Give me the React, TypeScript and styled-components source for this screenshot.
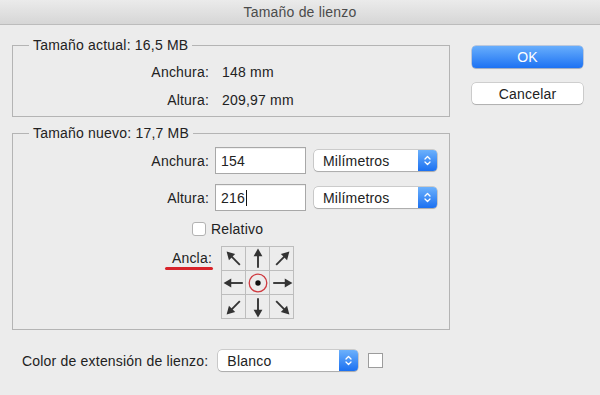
import React from 'react';
import styled, { createGlobalStyle } from 'styled-components';

const GlobalStyle = createGlobalStyle`
  html, body {
    margin: 0;
    padding: 0;
  }
  body {
    background: #ececec;
    font-family: "Liberation Sans", Arial, sans-serif;
    font-size: 14px;
    letter-spacing: 0.2px;
    color: #222;
  }
`;

const Window = styled.div`
  width: 600px;
  height: 395px;
  background: #ececec;
  display: flex;
  flex-direction: column;
  overflow: hidden;
`;

const TitleBar = styled.div`
  height: 24px;
  flex-shrink: 0;
  display: flex;
  align-items: center;
  justify-content: center;
  background: linear-gradient(#ebebeb, #d6d6d6);
  border-bottom: 1px solid #bcbcbc;
  color: #4b4b4b;
  font-size: 14px;
`;

const Body = styled.div`
  display: flex;
  align-items: flex-start;
  gap: 22px;
  padding: 0 17px 0 12px;
`;

const Main = styled.div`
  width: 438px;
  display: flex;
  flex-direction: column;
`;

const Group = styled.fieldset<{ $top: number }>`
  margin: ${p => p.$top}px 0 0;
  padding: 0;
  min-width: 0;
  border: 1px solid #b4b4b4;
`;

const GroupTitle = styled.legend`
  margin-left: 16px;
  padding: 0 4px;
  line-height: 16px;
  font-size: 14px;
  color: #222;
`;

const FieldGrid = styled.div<{ $colGap: number; $rowGap: number; $rowH: number; $pad: string }>`
  display: grid;
  grid-template-columns: 196px auto;
  grid-auto-rows: ${p => p.$rowH}px;
  justify-content: start;
  align-items: center;
  column-gap: ${p => p.$colGap}px;
  row-gap: ${p => p.$rowGap}px;
  padding: ${p => p.$pad};
`;

const Label = styled.span`
  justify-self: end;
  line-height: 16px;
`;

const Value = styled.span`
  line-height: 16px;
`;

const Controls = styled.div`
  display: flex;
  align-items: center;
  gap: 8px;
`;

const InputBox = styled.div`
  width: 91px;
  height: 27px;
  box-sizing: border-box;
  display: flex;
  align-items: center;
  padding-left: 5px;
  background: #fff;
  border: 1px solid #a8a8a8;
  box-shadow: inset 0 1px 0 rgba(0, 0, 0, 0.06);
`;

const Caret = styled.span`
  width: 1px;
  height: 16px;
  background: #111;
  margin-left: 1px;
`;

const Select = styled.div<{ $width: number }>`
  width: ${p => p.$width}px;
  height: 21px;
  box-sizing: border-box;
  display: flex;
  align-items: center;
  background: #fff;
  border-radius: 4px;
  box-shadow: 0 0 0 0.5px rgba(0, 0, 0, 0.28), 0 1px 1px rgba(0, 0, 0, 0.16);
  padding-left: 9px;
  overflow: hidden;
`;

const SelectText = styled.span`
  flex: 1;
`;

const Stepper = styled.div`
  width: 19px;
  height: 100%;
  display: flex;
  align-items: center;
  justify-content: center;
  background: linear-gradient(#6cb1fc, #1b70f1);
`;

const CheckRow = styled.label`
  display: flex;
  align-items: center;
  gap: 5px;
  height: 16px;
  padding-left: 179px;
`;

const CheckBox = styled.span`
  width: 14px;
  height: 14px;
  box-sizing: border-box;
  background: #fff;
  border: 1px solid #b2b2b2;
  border-radius: 3px;
`;

const AnchorRow = styled.div`
  display: flex;
  align-items: flex-start;
  gap: 9px;
  margin-top: 9px;
  padding-bottom: 10px;
`;

const AnchorLabelCol = styled.div`
  width: 199px;
  text-align: right;
  margin-top: 4px;
  line-height: 16px;
`;

const AnchorLabel = styled.span`
  position: relative;
  display: inline-block;

  &::after {
    content: '';
    position: absolute;
    left: -7px;
    right: -1px;
    bottom: -4px;
    height: 3px;
    border-radius: 2px;
    background: #d8232a;
  }
`;

const AnchorGrid = styled.div`
  display: grid;
  grid-template-columns: repeat(3, 23px);
  grid-auto-rows: 23px;
  gap: 1px;
  padding: 1px;
  background: #bdbdbd;
`;

const AnchorCell = styled.div`
  background: #ececec;
  display: flex;
  align-items: center;
  justify-content: center;
`;

const Footer = styled.div`
  display: flex;
  align-items: center;
  gap: 10px;
  margin-top: 20px;
  padding-left: 10px;
`;

const Swatch = styled.span`
  width: 15px;
  height: 15px;
  box-sizing: border-box;
  background: #fff;
  border: 1px solid #9c9c9c;
`;

const Side = styled.div`
  width: 111px;
  display: flex;
  flex-direction: column;
  gap: 15px;
  margin-top: 21px;
`;

const Button = styled.button<{ $primary?: boolean }>`
  height: ${p => (p.$primary ? 22 : 21)}px;
  border: none;
  border-radius: 4px;
  font-family: inherit;
  font-size: 14px;
  letter-spacing: 0.2px;
  color: ${p => (p.$primary ? '#ffffff' : '#222')};
  background: ${p => (p.$primary ? 'linear-gradient(#68aefc, #1d72f3)' : '#ffffff')};
  box-shadow: ${p =>
    p.$primary
      ? '0 0 0 0.5px rgba(0, 60, 160, 0.4), 0 1px 1px rgba(0, 0, 0, 0.15)'
      : '0 0 0 0.5px rgba(0, 0, 0, 0.25), 0 1px 1px rgba(0, 0, 0, 0.15)'};
  padding: 0;
`;

function Chevrons() {
  return (
    <svg width="9" height="13" viewBox="0 0 9 13">
      <path d="M2 5 L4.5 2.5 L7 5 M2 8 L4.5 10.5 L7 8" fill="none" stroke="#fff" strokeWidth="1.3" strokeLinecap="round" strokeLinejoin="round" />
    </svg>
  );
}

function Arrow({ angle }: { angle: number }) {
  const diagonal = angle % 90 !== 0;
  return (
    <svg width="22" height="22" viewBox="-10 -10 20 20">
      <g transform={`rotate(${angle})`} fill="#333" stroke="#333">
        <line x1="0" y1={diagonal ? 7.5 : 8} x2="0" y2="-3" strokeWidth="1.7" />
        <polygon points="0,-9.5 -4,-2.5 4,-2.5" stroke="none" />
      </g>
    </svg>
  );
}

function Center() {
  return (
    <svg width="22" height="22" viewBox="-11 -11 22 22">
      <circle r="2.7" fill="#111" />
      <circle r="8.8" fill="none" stroke="#cf3a40" strokeWidth="1.3" />
    </svg>
  );
}

const anchors = [315, 0, 45, 270, null, 90, 225, 180, 135];

export default function App() {
  return (
    <>
      <GlobalStyle />
      <Window>
        <TitleBar>Tamaño de lienzo</TitleBar>
        <Body>
          <Main>
            <Group $top={12}>
              <GroupTitle>Tamaño actual: 16,5 MB</GroupTitle>
              <FieldGrid $colGap={13} $rowGap={12} $rowH={16} $pad="11px 0 8px">
                <Label>Anchura:</Label>
                <Value>148 mm</Value>
                <Label>Altura:</Label>
                <Value>209,97 mm</Value>
              </FieldGrid>
            </Group>

            <Group $top={8}>
              <GroupTitle>Tamaño nuevo: 17,7 MB</GroupTitle>
              <FieldGrid $colGap={6} $rowGap={10} $rowH={27} $pad="6px 0 10px">
                <Label>Anchura:</Label>
                <Controls>
                  <InputBox>154</InputBox>
                  <Select $width={123}>
                    <SelectText>Milímetros</SelectText>
                    <Stepper><Chevrons /></Stepper>
                  </Select>
                </Controls>
                <Label>Altura:</Label>
                <Controls>
                  <InputBox>216<Caret /></InputBox>
                  <Select $width={123}>
                    <SelectText>Milímetros</SelectText>
                    <Stepper><Chevrons /></Stepper>
                  </Select>
                </Controls>
              </FieldGrid>
              <CheckRow>
                <CheckBox />
                Relativo
              </CheckRow>
              <AnchorRow>
                <AnchorLabelCol>
                  <AnchorLabel>Ancla:</AnchorLabel>
                </AnchorLabelCol>
                <AnchorGrid>
                  {anchors.map((a, i) => (
                    <AnchorCell key={i}>
                      {a === null ? <Center /> : <Arrow angle={a} />}
                    </AnchorCell>
                  ))}
                </AnchorGrid>
              </AnchorRow>
            </Group>

            <Footer>
              <span>Color de extensión de lienzo:</span>
              <Select $width={140}>
                <SelectText>Blanco</SelectText>
                <Stepper><Chevrons /></Stepper>
              </Select>
              <Swatch />
            </Footer>
          </Main>

          <Side>
            <Button $primary>OK</Button>
            <Button>Cancelar</Button>
          </Side>
        </Body>
      </Window>
    </>
  );
}
